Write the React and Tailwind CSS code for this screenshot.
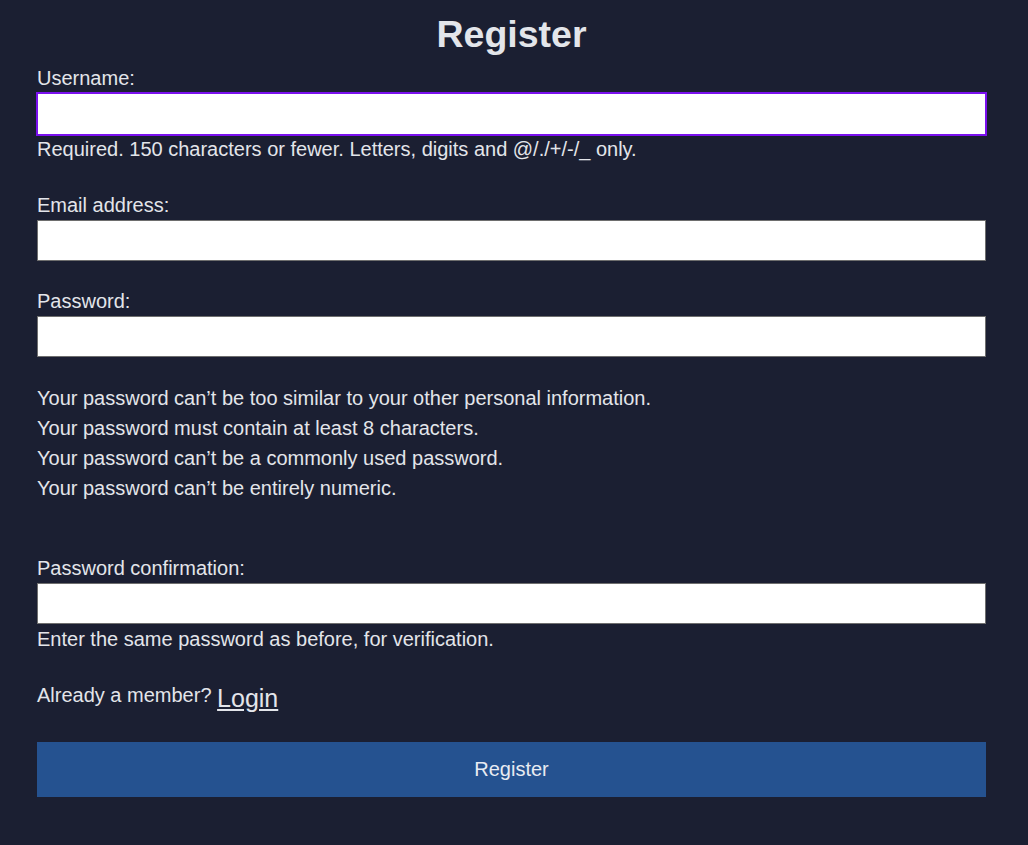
export default function App() {
  const font = { fontFamily: '"Liberation Sans", Arial, sans-serif' };
  return (
    <div className="min-h-[845px] w-full bg-[#1b1f32] text-[#e3e5ea]" style={font}>
      <div className="ml-[37px] w-[949px] pt-[12px] text-[20px]">
        <h1 className="text-center text-[37.5px] font-bold leading-[45px]">Register</h1>

        <label className="mt-[9px] block leading-[24px]">Username:</label>
        <input
          type="text"
          className="mt-[2px] -ml-px block h-[44px] w-[951px] border-2 border-[#7a10ee] bg-white outline-none"
        />
        <div className="mt-[1px] leading-[24px]">
          Required. 150 characters or fewer. Letters, digits and @/./+/-/_ only.
        </div>

        <label className="mt-[32px] block leading-[24px]">Email address:</label>
        <input
          type="email"
          className="mt-[3px] block h-[41px] w-full border border-[#6e6e6e] bg-white outline-none"
        />

        <label className="mt-[28px] block leading-[24px]">Password:</label>
        <input
          type="password"
          className="mt-[3px] block h-[41px] w-full border border-[#6e6e6e] bg-white outline-none"
        />

        <ul className="mt-[26px] leading-[30px]">
          <li>Your password can’t be too similar to your other personal information.</li>
          <li>Your password must contain at least 8 characters.</li>
          <li>Your password can’t be a commonly used password.</li>
          <li>Your password can’t be entirely numeric.</li>
        </ul>

        <label className="mt-[53px] block leading-[24px]">Password confirmation:</label>
        <input
          type="password"
          className="mt-[3px] block h-[41px] w-full border border-[#6e6e6e] bg-white outline-none"
        />
        <div className="mt-[3px] leading-[24px]">Enter the same password as before, for verification.</div>

        <div className="mt-[29px] leading-[30px]">
          Already a member?{" "}
          <a href="#" className="align-[-5px] text-[25px] underline underline-offset-[2px]">
            Login
          </a>
        </div>

        <button
          type="button"
          className="mt-[29px] block h-[55px] w-full bg-[#255290] pb-[2px] text-[20px] text-[#e8ebf2]"
        >
          Register
        </button>
      </div>
    </div>
  );
}
